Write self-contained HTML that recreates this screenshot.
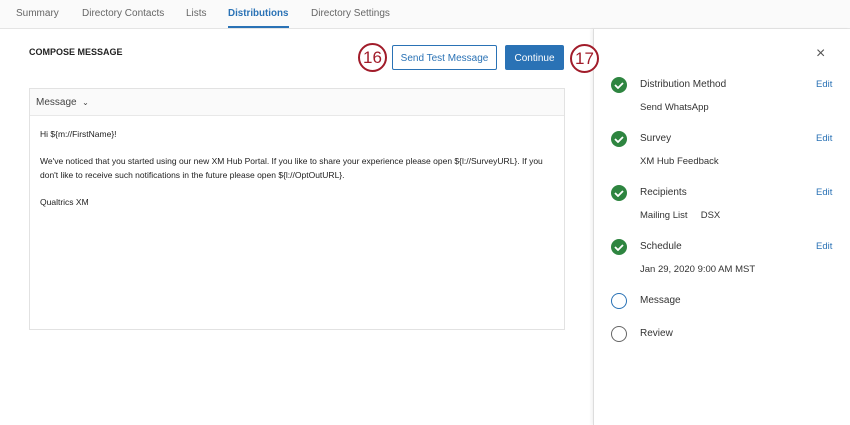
<!DOCTYPE html>
<html><head><style>
*{margin:0;padding:0;box-sizing:border-box}
body{width:850px;height:425px;background:#fff;font-family:"Liberation Sans",sans-serif;position:relative;overflow:hidden;color:#333}
.a{position:absolute;white-space:nowrap}
.nav{font-size:10px;color:#666;top:8px}
.circ{position:absolute;z-index:5;width:29px;height:29px;border:2px solid #a11c2a;border-radius:50%;background:#fff;color:#a11c2a;font-size:17px;text-align:center;line-height:25px}
.chk{position:absolute;left:611px;width:16px;height:16px;border-radius:50%;background:#2e8540}
.chk svg{position:absolute;left:3px;top:4px}
.t{font-size:10px;color:#333}
.e{font-size:9.5px;color:#2a72b5;left:816px}
.s{font-size:9.5px;color:#333;left:640px}
</style></head><body>
<div class="a" style="left:0;top:0;width:850px;height:29px;background:#fafafa;border-bottom:1px solid #e4e4e4"></div>
<div class="a nav" style="left:16px">Summary</div>
<div class="a nav" style="left:82px">Directory Contacts</div>
<div class="a nav" style="left:186px">Lists</div>
<div class="a nav" style="left:228px;color:#2a72b5;font-weight:bold;font-size:9.8px">Distributions</div>
<div class="a" style="left:228px;top:26px;width:61px;height:2px;background:#2a72b5"></div>
<div class="a nav" style="left:311px">Directory Settings</div>

<div class="a" style="left:29px;top:47px;font-size:9px;font-weight:bold;color:#222">COMPOSE MESSAGE</div>
<div class="circ" style="left:358px;top:43px">16</div>
<div class="a" style="left:392px;top:45px;width:105px;height:25px;border:1px solid #2a72b5;border-radius:2px;color:#2a72b5;font-size:10px;text-align:center;line-height:25px">Send Test Message</div>
<div class="a" style="left:505px;top:45px;width:59px;height:25px;background:#2a72b5;border-radius:2px;color:#fff;font-size:10px;text-align:center;line-height:27px">Continue</div>

<div class="a" style="left:29px;top:88px;width:536px;height:242px;border:1px solid #e2e2e2"></div>
<div class="a" style="left:30px;top:89px;width:534px;height:27px;background:#fafafa;border-bottom:1px solid #e8e8e8"></div>
<div class="a" style="left:36px;top:97px;font-size:10px;color:#444">Message &nbsp;<span style="font-size:8px">⌄</span></div>
<div class="a" style="left:40px;top:128px;font-size:8.5px;color:#222;line-height:13.5px">Hi ${m://FirstName}!<br><br>We've noticed that you started using our new XM Hub Portal. If you like to share your experience please open ${l://SurveyURL}. If you<br>don't like to receive such notifications in the future please open ${l://OptOutURL}.<br><br>Qualtrics XM</div>

<div class="a" style="left:593px;top:29px;width:257px;height:396px;border-left:1px solid #ddd;box-shadow:-2px 0 3px rgba(0,0,0,0.05);background:#fff"></div>
<div class="circ" style="left:570px;top:44px">17</div>
<div class="a" style="left:816px;top:45px;font-size:16px;color:#555">×</div>

<div class="chk" style="top:77px"><svg width="10" height="8"><path d="M1 4l3 3 5-5" stroke="#fff" stroke-width="1.8" fill="none"/></svg></div>
<div class="a t" style="left:640px;top:79px">Distribution Method</div><div class="a e" style="top:79px">Edit</div>
<div class="a s" style="top:102px">Send WhatsApp</div>
<div class="chk" style="top:131px"><svg width="10" height="8"><path d="M1 4l3 3 5-5" stroke="#fff" stroke-width="1.8" fill="none"/></svg></div>
<div class="a t" style="left:640px;top:133px">Survey</div><div class="a e" style="top:133px">Edit</div>
<div class="a s" style="top:156px">XM Hub Feedback</div>
<div class="chk" style="top:185px"><svg width="10" height="8"><path d="M1 4l3 3 5-5" stroke="#fff" stroke-width="1.8" fill="none"/></svg></div>
<div class="a t" style="left:640px;top:187px">Recipients</div><div class="a e" style="top:187px">Edit</div>
<div class="a s" style="top:210px">Mailing List &nbsp;&nbsp;&nbsp; DSX</div>
<div class="chk" style="top:239px"><svg width="10" height="8"><path d="M1 4l3 3 5-5" stroke="#fff" stroke-width="1.8" fill="none"/></svg></div>
<div class="a t" style="left:640px;top:241px">Schedule</div><div class="a e" style="top:241px">Edit</div>
<div class="a s" style="top:264px">Jan 29, 2020 9:00 AM MST</div>
<div class="a" style="left:611px;top:293px;width:16px;height:16px;border:1.5px solid #2a72b5;border-radius:50%"></div>
<div class="a t" style="left:640px;top:295px">Message</div>
<div class="a" style="left:611px;top:326px;width:16px;height:16px;border:1.5px solid #666;border-radius:50%"></div>
<div class="a t" style="left:640px;top:328px">Review</div>
</body></html>
